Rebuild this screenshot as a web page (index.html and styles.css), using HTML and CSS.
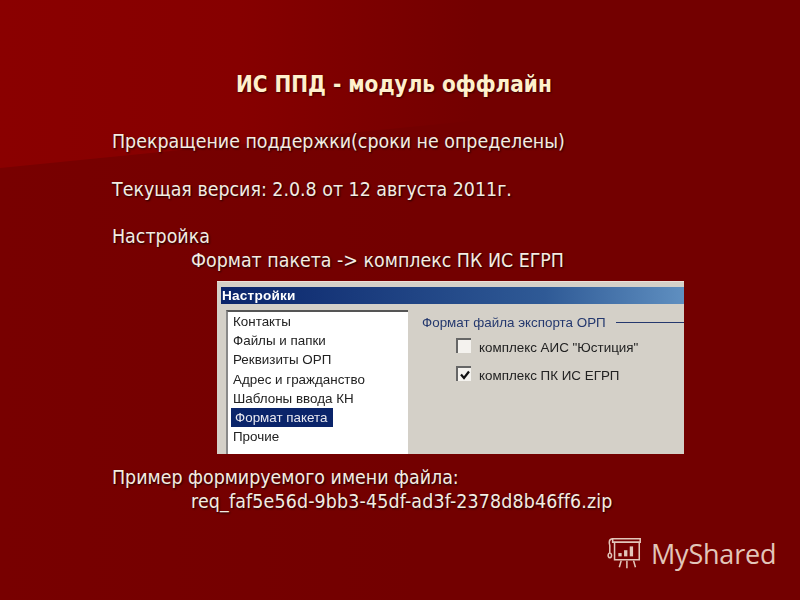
FILE: index.html
```
<!DOCTYPE html>
<html lang="ru">
<head>
<meta charset="utf-8">
<title>ИС ППД - модуль оффлайн</title>
<link rel="stylesheet" href="styles.css">
</head>
<body>
<div class="slide">
  <div class="wedge"></div>
  <h1 class="title">ИС ППД - модуль оффлайн</h1>
  <div class="content">
    <p class="line gap">Прекращение поддержки(сроки не определены)</p>
    <p class="line gap">Текущая версия: 2.0.8 от 12 августа 2011г.</p>
    <p class="line">Настройка</p>
    <p class="line indent">Формат пакета -&gt; комплекс ПК ИС ЕГРП</p>
    <div class="dialog">
      <div class="dialog-title">Настройки</div>
      <div class="dialog-body">
        <ul class="list">
          <li>Контакты</li>
          <li>Файлы и папки</li>
          <li>Реквизиты ОРП</li>
          <li>Адрес и гражданство</li>
          <li>Шаблоны ввода КН</li>
          <li><span class="selected">Формат пакета</span></li>
          <li>Прочие</li>
        </ul>
        <div class="panel">
          <div class="group"><span>Формат файла экспорта ОРП</span><i class="rule"></i></div>
          <div class="check"><i class="box"></i>комплекс АИС "Юстиция"</div>
          <div class="check"><i class="box"><svg viewBox="0 0 12 12" width="12" height="12"><path d="M2 5.5 L5 9 L10 2.5" fill="none" stroke="#111" stroke-width="2.2"/></svg></i>комплекс ПК ИС ЕГРП</div>
        </div>
      </div>
    </div>
    <p class="line">Пример формируемого имени файла:</p>
    <p class="line indent wide">req_faf5e56d-9bb3-45df-ad3f-2378d8b46ff6.zip</p>
  </div>
  <div class="brand">
    <svg class="brand-icon" viewBox="0 0 40 40" width="38" height="38" fill="none" stroke="#e2c6ba" stroke-width="1.6">
      <path d="M7 4 H36 V7.5 H7 Z"/>
      <path d="M7 4 C3 4 3 8 4 11 V19 M4 19 a1.8 2.5 0 1 0 .1 0"/>
      <path d="M9 8 V26 H35 V8"/>
      <path d="M16 27 L14 34 M22 27 V35 M29 27 L31 34"/>
      <g fill="#e2c6ba" stroke="none">
        <rect x="13" y="19" width="3.5" height="3.5"/>
        <rect x="19" y="16" width="3.5" height="6.5"/>
        <rect x="25" y="12" width="3.5" height="10.5"/>
      </g>
    </svg>
    <span class="brand-name">MyShared</span>
  </div>
</div>
</body>
</html>
```
FILE: styles.css
```
* { box-sizing: border-box; }
html, body { margin: 0; padding: 0; }
body { width: 800px; height: 600px; overflow: hidden; font-family: "DejaVu Sans Condensed", "DejaVu Sans", sans-serif; font-stretch: condensed; }
.slide { position: relative; width: 800px; height: 600px; background: linear-gradient(90deg, #780000 0, #730000 420px); padding: 69px 0 0 112px; overflow: hidden; }
.wedge { position: absolute; inset: 0; background: linear-gradient(90deg, #8a0000 0, #860000 240px, #730000 480px); clip-path: polygon(0 0, 800px 0, 800px 88px, 0 168px); }
.title { position: relative; margin: 0 0 31px 124px; font-size: 22.3px; line-height: 30px; font-weight: 700; color: #fff0cc; text-shadow: 1px 1px 2px #3a0000; }
.content { position: relative; }
.line { margin: 0; font-size: 19.4px; line-height: 24px; color: #f4ece2; text-shadow: 1px 1px 2px #1a0000; white-space: nowrap; }
.line.gap { margin-bottom: 23.5px; }
.indent { padding-left: 79px; }
.wide { letter-spacing: 0.15px; }
.dialog { width: 467px; height: 173px; margin: 8px 0 12px 105px; padding-top: 5px; background: #d4d0c8; border-top: 1px solid #eadfd8; display: flex; flex-direction: column; overflow: hidden; font-family: "Liberation Sans", sans-serif; font-stretch: normal; filter: blur(0.4px); }
.dialog-title { height: 17px; margin-left: 4px; padding-left: 1px; background: linear-gradient(90deg, #0a246a, #2f5a96 70%, #5f8fc0); color: #fff; font-size: 13.6px; line-height: 17px; font-weight: 700; letter-spacing: 0.2px; flex: none; }
.dialog-body { display: flex; flex: 1; }
.list { list-style: none; width: 182px; margin: 6px 0 0 9px; padding: 0 0 0 5px; background: #fff; border-top: 2px solid #555; border-left: 2px solid #888; font-size: 13.4px; line-height: 19.2px; color: #222; }
.selected { display: inline-block; background: #0a246a; color: #e8e8f0; padding: 0 6px 0 4px; margin-left: -2px; }
.panel { flex: 1; padding: 8px 0 0 14px; font-size: 13.4px; color: #222; }
.group { display: flex; align-items: center; color: #24386e; height: 20px; margin-bottom: 1px; }
.rule { flex: 1; height: 1px; background: #24386e; margin-left: 10px; }
.check { display: flex; align-items: center; height: 28px; margin-left: 34px; }
.box { width: 15px; height: 15px; margin: 0 8px 3px 0; background: #f4f2ee; border-top: 2px solid #666; border-left: 2px solid #666; display: flex; align-items: center; justify-content: center; }
.brand { position: absolute; left: 606px; top: 535px; display: flex; align-items: center; gap: 7px; color: #e2c6ba; }
.brand-name { font-family: "Open Sans", sans-serif; font-stretch: normal; font-size: 27px; line-height: 38px; letter-spacing: -0.2px; }
```
